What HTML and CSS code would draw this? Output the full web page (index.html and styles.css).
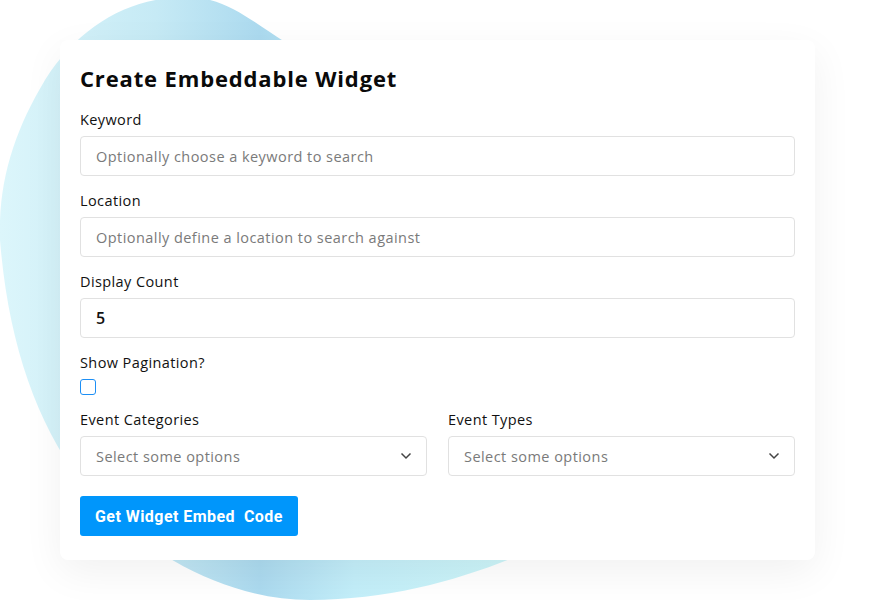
FILE: index.html
```html
<!DOCTYPE html>
<html lang="en">
<head>
    <meta charset="UTF-8">
    <meta name="viewport" content="width=device-width, initial-scale=1.0">
    <title>Create Embeddable Widget</title>
    <link rel="stylesheet" href="styles.css">
</head>
<body>
    <svg class="blob" width="875" height="600" viewBox="0 0 875 600">
        <defs>
            <linearGradient id="blobFill" x1="0" y1="0" x2="520" y2="0" gradientUnits="userSpaceOnUse">
                <stop offset="0" stop-color="#dcf6fb"/>
                <stop offset="0.3" stop-color="#c6eaf5"/>
                <stop offset="0.5" stop-color="#acdaef"/>
                <stop offset="0.68" stop-color="#c3eef9"/>
                <stop offset="1" stop-color="#cdf5f8"/>
            </linearGradient>
        </defs>
        <path fill="url(#blobFill)" d="M 187 -3 C 130 -3, 80 25, 45 80 C 15 130, -2 180, 0 240 C 8 340, 35 420, 80 480 C 130 545, 220 600, 310 600 C 390 600, 460 580, 520 555 C 600 500, 560 260, 430 140 C 370 85, 330 65, 285 42 C 250 20, 225 -3, 187 -3 Z"/>
    </svg>

    <div class="card">
        <h1 class="title">Create Embeddable Widget</h1>

        <div class="field">
            <label class="label">Keyword</label>
            <input class="input" type="text" placeholder="Optionally choose a keyword to search">
        </div>

        <div class="field">
            <label class="label">Location</label>
            <input class="input" type="text" placeholder="Optionally define a location to search against">
        </div>

        <div class="field">
            <label class="label">Display Count</label>
            <input class="input input-value" type="text" value="5">
        </div>

        <div class="field">
            <label class="label">Show Pagination?</label>
            <input class="check" type="checkbox">
        </div>

        <div class="row">
            <div class="field">
                <label class="label">Event Categories</label>
                <div class="select">
                    <span>Select some options</span>
                    <svg width="12" height="8" viewBox="0 0 12 8"><path d="M1.5 1.5 L6 6 L10.5 1.5" fill="none" stroke="#444" stroke-width="1.5"/></svg>
                </div>
            </div>
            <div class="field">
                <label class="label">Event Types</label>
                <div class="select">
                    <span>Select some options</span>
                    <svg width="12" height="8" viewBox="0 0 12 8"><path d="M1.5 1.5 L6 6 L10.5 1.5" fill="none" stroke="#444" stroke-width="1.5"/></svg>
                </div>
            </div>
        </div>

        <button class="btn">Get Widget Embed&nbsp; Code</button>
    </div>
</body>
</html>
```

FILE: styles.css
```css
body {
    margin: 0;
    height: 600px;
    overflow: hidden;
    background-color: #fff;
    font-family: "Open Sans", "DejaVu Sans", sans-serif;
    color: #111;
    position: relative;
}
.blob {
    position: absolute;
    left: 0;
    top: 0;
}
.card {
    position: relative;
    margin: 40px 0 0 60px;
    width: 755px;
    height: 520px;
    box-sizing: border-box;
    padding: 20px 20px 24px;
    background-color: #fff;
    border-radius: 8px;
    box-shadow: 0 12px 40px rgba(0, 0, 0, 0.06);
}
.title {
    margin: 0 0 14px;
    font-size: 22px;
    line-height: 36px;
    font-weight: 700;
    letter-spacing: 0.85px;
    color: #0a0a0a;
}
.field {
    display: flex;
    flex-direction: column;
    margin-bottom: 15px;
}
.label {
    font-size: 14.5px;
    line-height: 20px;
    letter-spacing: 0.4px;
    margin-bottom: 6px;
    color: #111;
}
.input {
    height: 40px;
    box-sizing: border-box;
    border: 1px solid #e1e1e1;
    border-radius: 4px;
    padding: 0 15px;
    font-family: inherit;
    font-size: 14.5px;
    letter-spacing: 0.45px;
    color: #111;
    outline: none;
}
.input::placeholder {
    color: #7a7a7a;
}
.input-value {
    font-size: 16px;
    font-weight: 600;
}
.check {
    appearance: none;
    margin: 0;
    width: 16px;
    height: 16px;
    box-sizing: border-box;
    border: 1px solid #1d8ff5;
    border-radius: 3px;
}
.row {
    display: grid;
    grid-template-columns: 1fr 1fr;
    column-gap: 21px;
}
.row .field {
    margin-bottom: 20px;
}
.select {
    height: 40px;
    box-sizing: border-box;
    border: 1px solid #e1e1e1;
    border-radius: 4px;
    padding: 0 14px 0 15px;
    display: flex;
    align-items: center;
    justify-content: space-between;
    font-size: 14.5px;
    letter-spacing: 0.45px;
    color: #7a7a7a;
}
.btn {
    height: 40px;
    padding: 0 15px;
    border: none;
    border-radius: 3px;
    background-color: #0096fb;
    color: #fff;
    font-family: Roboto, "Liberation Sans", sans-serif;
    font-weight: 700;
    font-size: 16px;
    letter-spacing: 0.45px;
    cursor: pointer;
}
```
